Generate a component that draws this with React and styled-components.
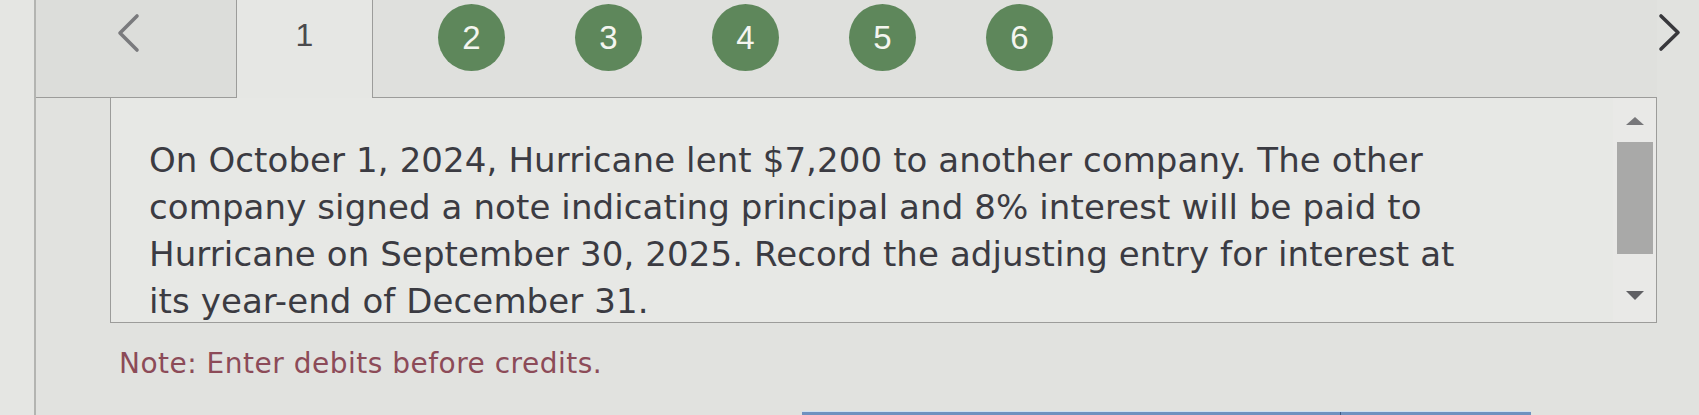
import React from "react";
import styled, { createGlobalStyle } from "styled-components";

const GlobalStyle = createGlobalStyle`
  html, body {
    margin: 0;
    padding: 0;
    background: #e5e6e3;
    overflow: hidden;
  }
  body {
    width: 1699px;
    height: 415px;
    font-family: "DejaVu Sans", Verdana, sans-serif;
  }
  * { box-sizing: border-box; }
`;

const Page = styled.div`
  display: flex;
  height: 415px;
  padding-left: 34px;
`;

const Frame = styled.div`
  flex: 1;
  display: flex;
  flex-direction: column;
  border-left: 2px solid #b3b4b1;
  background: #e1e2df;
`;

const TabStrip = styled.div`
  display: flex;
  height: 98px;
  flex-shrink: 0;
`;

const NavPrev = styled.div`
  width: 201px;
  display: flex;
  align-items: flex-start;
  padding: 13px 0 0 79px;
  background: #dcddda;
  border-bottom: 1px solid #9c9c9a;
  border-right: 1px solid #9c9c9a;
`;

const ActiveTab = styled.div`
  width: 135px;
  display: flex;
  justify-content: center;
  align-items: flex-start;
  padding-top: 19px;
  background: #e6e7e4;
  font-family: "Liberation Sans", Arial, sans-serif;
  font-size: 32px;
  line-height: 32px;
  color: #4a4a4c;
`;

const Steps = styled.div`
  flex: 1;
  display: flex;
  align-items: flex-start;
  gap: 70px;
  padding: 4px 0 0 65px;
  background: #dfe0dd;
  border-left: 1px solid #9c9c9a;
  border-bottom: 1px solid #9c9c9a;
`;

const StepCircle = styled.div`
  width: 67px;
  height: 67px;
  border-radius: 50%;
  background: #5e875b;
  color: #f4f5ef;
  display: flex;
  align-items: center;
  justify-content: center;
  font-family: "Liberation Sans", Arial, sans-serif;
  font-size: 33px;
  line-height: 1;
`;

const NavNext = styled.div`
  width: 42px;
  display: flex;
  align-items: flex-start;
  padding-top: 13px;
`;

const Body = styled.div`
  flex: 1;
  display: flex;
  flex-direction: column;
  padding-left: 74px;
`;

const QuestionBox = styled.div`
  width: 1547px;
  height: 225px;
  display: flex;
  overflow: hidden;
  background: #e7e8e5;
  border: 1px solid #9c9c9a;
  border-top: none;
`;

const QuestionText = styled.p`
  flex: 1;
  margin: 0;
  padding: 39px 0 0 38px;
  font-size: 34px;
  line-height: 47px;
  letter-spacing: 0.1px;
  color: #3b3b42;
  white-space: nowrap;
`;

const Scrollbar = styled.div`
  width: 43px;
  display: flex;
  flex-direction: column;
  align-items: center;
  padding-top: 19px;
  background: #e9e9e7;
`;

const ArrowUp = styled.div`
  width: 0;
  height: 0;
  border-left: 9px solid transparent;
  border-right: 9px solid transparent;
  border-bottom: 8px solid #77777a;
`;

const Thumb = styled.div`
  width: 36px;
  height: 112px;
  margin-top: 17px;
  background: #a9a9a8;
`;

const Spacer = styled.div`
  flex: 1;
`;

const ArrowDown = styled.div`
  width: 0;
  height: 0;
  margin-bottom: 22px;
  border-left: 9px solid transparent;
  border-right: 9px solid transparent;
  border-top: 9px solid #606064;
`;

const Note = styled.p`
  margin: 25px 0 0 9px;
  font-size: 28px;
  line-height: 32px;
  letter-spacing: 0.5px;
  color: #8c4b58;
`;

const TableHead = styled.div`
  display: flex;
  margin: auto 0 0 692px;
  width: 729px;
  height: 4px;
  border-top: 1px solid #cfe0f2;
`;

const HeadCell = styled.div`
  width: ${(p) => p.$w || "auto"};
  flex: ${(p) => (p.$w ? "none" : 1)};
  background: #6f91bf;
  border-left: ${(p) => (p.$divider ? "1px solid #3e5b84" : "none")};
`;

const Chevron = ({ dir, color }) => (
  <svg width="26" height="40" viewBox="0 0 26 40" fill="none">
    <polyline
      points={dir === "left" ? "22,3 5,20 22,37" : "4,3 21,19.5 4,36"}
      stroke={color}
      strokeWidth="3.6"
      strokeLinecap="round"
      strokeLinejoin="round"
    />
  </svg>
);

const steps = [2, 3, 4, 5, 6];

export default function App() {
  return (
    <>
      <GlobalStyle />
      <Page>
        <Frame>
          <TabStrip>
            <NavPrev>
              <Chevron dir="left" color="#7a7a7d" />
            </NavPrev>
            <ActiveTab>1</ActiveTab>
            <Steps>
              {steps.map((n) => (
                <StepCircle key={n}>{n}</StepCircle>
              ))}
            </Steps>
            <NavNext>
              <Chevron dir="right" color="#38383c" />
            </NavNext>
          </TabStrip>
          <Body>
            <QuestionBox>
              <QuestionText>
                On October 1, 2024, Hurricane lent $7,200 to another company. The other
                <br />
                company signed a note indicating principal and 8% interest will be paid to
                <br />
                Hurricane on September 30, 2025. Record the adjusting entry for interest at
                <br />
                its year-end of December 31.
              </QuestionText>
              <Scrollbar>
                <ArrowUp />
                <Thumb />
                <Spacer />
                <ArrowDown />
              </Scrollbar>
            </QuestionBox>
            <Note>Note: Enter debits before credits.</Note>
            <TableHead>
              <HeadCell $w="538px" />
              <HeadCell $divider />
            </TableHead>
          </Body>
        </Frame>
      </Page>
    </>
  );
}
